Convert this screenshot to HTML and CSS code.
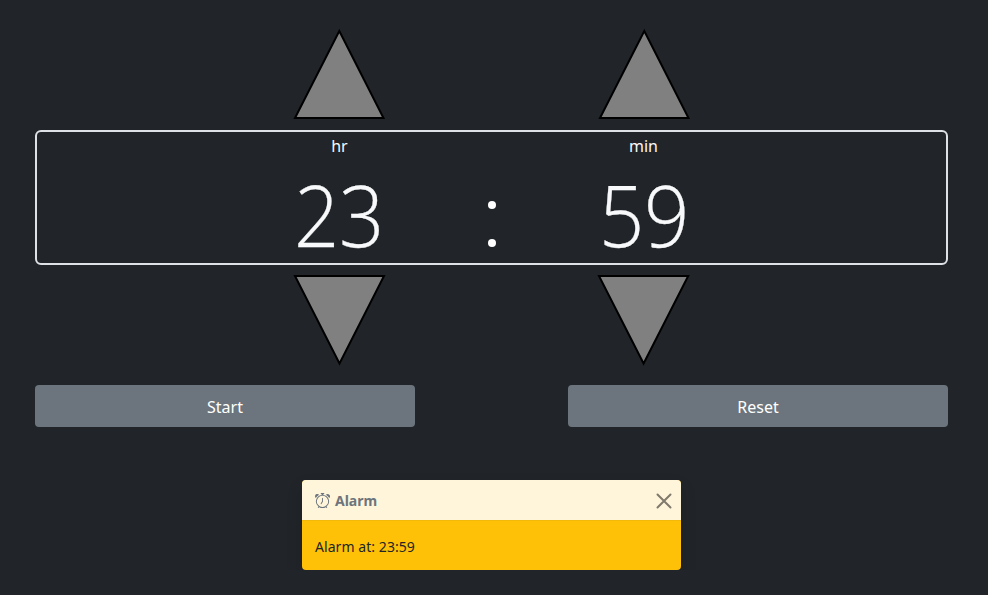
FILE: index.html
```html
<!DOCTYPE html>
<html lang="en">
<head>
<meta charset="utf-8">
<title>Alarm</title>
<link rel="stylesheet" href="styles.css">
</head>
<body>
<main class="clock">
  <div class="row arrows-up">
    <svg class="arrow hours" width="94" height="94" viewBox="0 0 94 94"><path d="M3 91H91.5L47.3 4Z"/></svg>
    <svg class="arrow minutes" width="94" height="94" viewBox="0 0 94 94"><path d="M3 91H91.5L47.3 4Z"/></svg>
  </div>
  <section class="row display">
    <div class="unit hours"><span class="label">hr</span><span class="digits">23</span></div>
    <div class="colon"><i></i><i></i></div>
    <div class="unit minutes"><span class="label">min</span><span class="digits">59</span></div>
  </section>
  <div class="row arrows-down">
    <svg class="arrow hours" width="94" height="94" viewBox="0 0 94 94"><path d="M3 2H92L47.5 89.5Z"/></svg>
    <svg class="arrow minutes" width="94" height="94" viewBox="0 0 94 94"><path d="M2 2H91.2L46.6 89.5Z"/></svg>
  </div>
  <div class="buttons">
    <button class="btn">Start</button>
    <button class="btn">Reset</button>
  </div>
  <aside class="toast">
    <header class="toast-header">
      <svg class="alarm-icon" width="15" height="15" viewBox="0 0 16 16"><path d="M8.5 5.5a.5.5 0 0 0-1 0v3.362l-1.429 2.38a.5.5 0 1 0 .858.515l1.5-2.5A.5.5 0 0 0 8.5 9V5.5z"/><path d="M6.5 0a.5.5 0 0 0 0 1H7v1.07a7.001 7.001 0 0 0-3.273 12.474l-.602.602a.5.5 0 0 0 .707.708l.746-.746A6.97 6.97 0 0 0 8 16a6.97 6.97 0 0 0 3.422-.892l.746.746a.5.5 0 0 0 .707-.708l-.601-.602A7.001 7.001 0 0 0 9 2.07V1h.5a.5.5 0 0 0 0-1h-3zm1.038 3.018a6.093 6.093 0 0 1 .924 0 6 6 0 1 1-.924 0zM0 3.5c0 .753.333 1.429.86 1.887A8.035 8.035 0 0 1 4.387 1.86 2.5 2.5 0 0 0 0 3.5zM13.5 1c-.753 0-1.429.333-1.887.86a8.035 8.035 0 0 1 3.527 3.527A2.5 2.5 0 0 0 13.5 1z"/></svg>
      <strong>Alarm</strong>
      <svg class="close" width="16" height="16" viewBox="0 0 16 16"><path d="M1.5 1.5L14.5 14.5M14.5 1.5L1.5 14.5"/></svg>
    </header>
    <div class="toast-body">Alarm at: 23:59</div>
  </aside>
</main>
</body>
</html>
```
FILE: styles.css
```css
* { box-sizing: border-box; }
body {
  margin: 0;
  background: #212529;
  color: #f8f9fa;
  font: 17px/25px "Noto Sans", "Open Sans", sans-serif;
}
.clock { width: 913px; margin-left: 35px; padding-top: 27px; }
.row {
  display: grid;
  grid-template-columns: 152px 153px 152px;
  justify-content: center;
}
.arrows-up { height: 103px; }
.arrows-down { height: 120px; padding-top: 9px; }
.hours { grid-column: 1; justify-self: center; }
.minutes { grid-column: 3; justify-self: center; }
.arrow { display: block; }
.arrow path { fill: gray; stroke: #000; stroke-width: 2; }
.display { height: 135px; border: 2px solid #dee2e6; border-radius: 6px; }
.unit { display: flex; flex-direction: column; align-items: center; padding-top: 2px; }
.label { font-size: 16px; padding-left: 1px; }
.minutes .label { padding-left: 0; margin-left: -1px; }
.digits {
  margin-top: 15px;
  font: 300 85px/80px "Open Sans", sans-serif;
  letter-spacing: -.5px;
  margin-right: -1px;
  transform: scaleX(.935);
  -webkit-text-stroke: .3px #f8f9fa;
}
.colon {
  display: flex;
  flex-direction: column;
  align-items: center;
  gap: 30px;
  padding-top: 69px;
}
.colon i { width: 8px; height: 8px; border-radius: 50%; background: #fff; }
.buttons { display: flex; justify-content: space-between; }
.btn {
  width: 380px;
  height: 42px;
  padding: 1px 0 0;
  border: 0;
  border-radius: 4px;
  background: #6c757d;
  color: #fff;
  font: 16px/24px "Noto Sans", sans-serif;
}
.toast {
  width: 379px;
  height: 90px;
  margin: 53px auto 0;
  border-radius: 4px;
  overflow: hidden;
  background: #ffc107;
  color: #212529;
  box-shadow: 0 8px 16px rgba(0, 0, 0, .15);
  font-size: 14px;
}
.toast-header {
  display: flex;
  align-items: center;
  height: 41px;
  padding: 0 10px 0 13px;
  background: #fff5da;
  color: #6c757d;
  border-bottom: 1px solid #f2b90b;
}
.alarm-icon { fill: currentColor; margin-right: 5px; }
.close { margin: 1px -1px 0 auto; stroke: #807a6d; stroke-width: 2; stroke-linecap: round; }
.toast-body { padding: 13px; letter-spacing: .06px; }
```
